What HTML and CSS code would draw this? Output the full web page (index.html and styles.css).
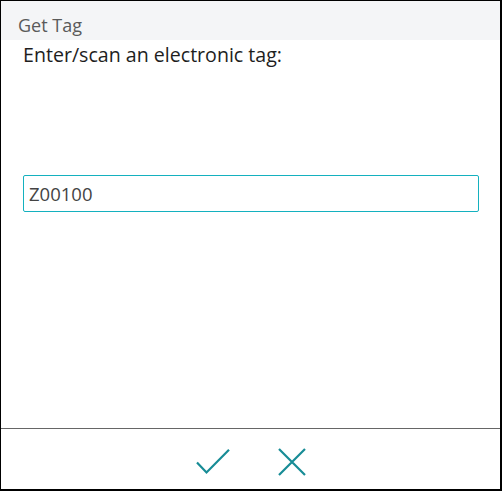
FILE: index.html
```html
<!DOCTYPE html>
<html>
<head>
<meta charset="utf-8">
<link rel="stylesheet" href="styles.css">
</head>
<body>
<div class="dialog">
  <div class="header">Get Tag</div>
  <div class="content">
    <div class="prompt">Enter/scan an electronic tag:</div>
    <div class="field">Z00100</div>
  </div>
  <div class="footer">
    <button class="btn" aria-label="OK">
      <svg width="34" height="26" viewBox="0 0 34 26"><path d="M1 13.5 L10.5 23.5 L33 0.8" fill="none" stroke="#178c96" stroke-width="2.2"/></svg>
    </button>
    <button class="btn" aria-label="Cancel">
      <svg width="28" height="28" viewBox="0 0 28 28"><path d="M1 1 L27 27 M27 1 L1 27" fill="none" stroke="#178c96" stroke-width="2.2"/></svg>
    </button>
  </div>
</div>
</body>
</html>
```
FILE: styles.css
```css
html, body { margin: 0; padding: 0; background: #fff; }
.dialog {
  width: 502px; height: 491px; box-sizing: border-box;
  border-style: solid; border-color: #000; border-width: 1px 2px 2px 1px;
  display: flex; flex-direction: column;
  font-family: "Open Sans", "Noto Sans", sans-serif;
}
.header {
  height: 39px; box-sizing: border-box; background: #f4f5f7; color: #5a5a5a;
  font-size: 18px; line-height: 26px; padding: 11px 0 0 17px;
}
.content { flex: 1; padding: 0 21px 0 22px; }
.prompt { font-size: 19.6px; color: #1e1e1e; line-height: 30px; margin-top: 0; }
.field {
  margin-top: 105px; height: 37px; box-sizing: border-box;
  border: 1px solid #14b1bf; border-radius: 2px;
  font-size: 18.5px; color: #444; line-height: 35px; padding-left: 5px;
}
.footer {
  height: 61px; box-sizing: border-box; padding-top: 6px; border-top: 1px solid #666;
  display: flex; justify-content: center; align-items: center; gap: 48px;
}
.btn { background: none; border: 0; padding: 0; display: flex; }
```
